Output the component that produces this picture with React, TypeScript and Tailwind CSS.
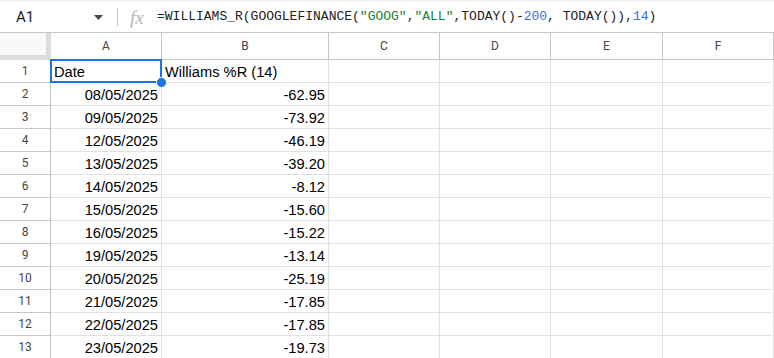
import React from 'react';

const cols = ['A', 'B', 'C', 'D', 'E', 'F'];

const rows: [string, string][] = [
  ['08/05/2025', '-62.95'],
  ['09/05/2025', '-73.92'],
  ['12/05/2025', '-46.19'],
  ['13/05/2025', '-39.20'],
  ['14/05/2025', '-8.12'],
  ['15/05/2025', '-15.60'],
  ['16/05/2025', '-15.22'],
  ['19/05/2025', '-13.14'],
  ['20/05/2025', '-25.19'],
  ['21/05/2025', '-17.85'],
  ['22/05/2025', '-17.85'],
  ['23/05/2025', '-19.73'],
];

const gridCols = 'grid grid-cols-[51px_111px_167px_111px_111px_112px_111px]';

const FormulaBar = () => (
  <div className="flex items-center h-[33px] border-t-2 border-t-[#f1f3f4] border-b border-b-[#c4c7c5] bg-white">
    <div className="w-[117px] flex items-center pl-[16px] pr-[14px]">
      <span className="text-[15px] text-[#202124]" style={{ fontFamily: 'Roboto, Arial, sans-serif' }}>A1</span>
      <svg className="ml-auto" width="9" height="5" viewBox="0 0 9 5">
        <path d="M0 0h9L4.5 5z" fill="#444746" />
      </svg>
    </div>
    <div className="w-px h-[18px] bg-[#c4c7c5]" />
    <span
      className="ml-[12px] w-[16px] text-[19px] italic text-[#b4b7b9] leading-none"
      style={{ fontFamily: '"Liberation Serif", serif' }}
    >
      fx
    </span>
    <div
      className="ml-[11px] text-[13px] text-[#202124] whitespace-pre"
      style={{ fontFamily: '"Liberation Mono", monospace' }}
    >
      =WILLIAMS_R(GOOGLEFINANCE(<span className="text-[#188038]">"GOOG"</span>,
      <span className="text-[#188038]">"ALL"</span>,TODAY()-<span className="text-[#3b6fd8]">200</span>, TODAY()),
      <span className="text-[#3b6fd8]">14</span>)
    </div>
  </div>
);

export default function App() {
  return (
    <div className="w-[774px] h-[358px] overflow-hidden bg-white" style={{ fontFamily: 'Arial, "Liberation Sans", sans-serif' }}>
      <FormulaBar />
      <div className="relative">
        <div className={`${gridCols} h-[27px]`}>
          <div className="bg-[#f8f9fa] border-r-[5px] border-b-[5px] border-[#dadce0]" />
          {cols.map((c) => (
            <div
              key={c}
              className="flex items-center justify-center border-r border-b border-[#c4c7c5] text-[12px] text-[#444746]"
              style={{ fontFamily: 'Roboto, Arial, sans-serif' }}
            >
              {c}
            </div>
          ))}
        </div>
        {[['Date', 'Williams %R (14)'] as [string, string], ...rows].map((r, i) => (
          <div key={i} className={`${gridCols} h-[23px]`}>
            <div
              className="flex items-center justify-center border-r border-b border-[#c4c7c5] text-[12px] text-[#444746]"
              style={{ fontFamily: 'Roboto, Arial, sans-serif' }}
            >
              {i + 1}
            </div>
            <div className={`flex items-end pb-[1px] px-[3px] border-r border-b border-[#e1e3e1] text-[14.67px] text-black leading-[18px] ${i === 0 ? 'justify-start' : 'justify-end'}`}>
              {r[0]}
            </div>
            <div className={`flex items-end pb-[1px] px-[3px] border-r border-b border-[#e1e3e1] text-[14.67px] text-black leading-[18px] whitespace-nowrap ${i === 0 ? 'justify-start' : 'justify-end'}`}>
              {r[1]}
            </div>
            {[0, 1, 2, 3].map((k) => (
              <div key={k} className="border-r border-b border-[#e1e3e1]" />
            ))}
          </div>
        ))}
        {/* selection of A1 */}
        <div className="absolute left-[50px] top-[26px] w-[112px] h-[24px] border-2 border-[#1a73e8] pointer-events-none" />
        <div className="absolute left-[156px] top-[44px] w-[11px] h-[11px] rounded-full bg-[#1a73e8] border border-white" />
      </div>
    </div>
  );
}
